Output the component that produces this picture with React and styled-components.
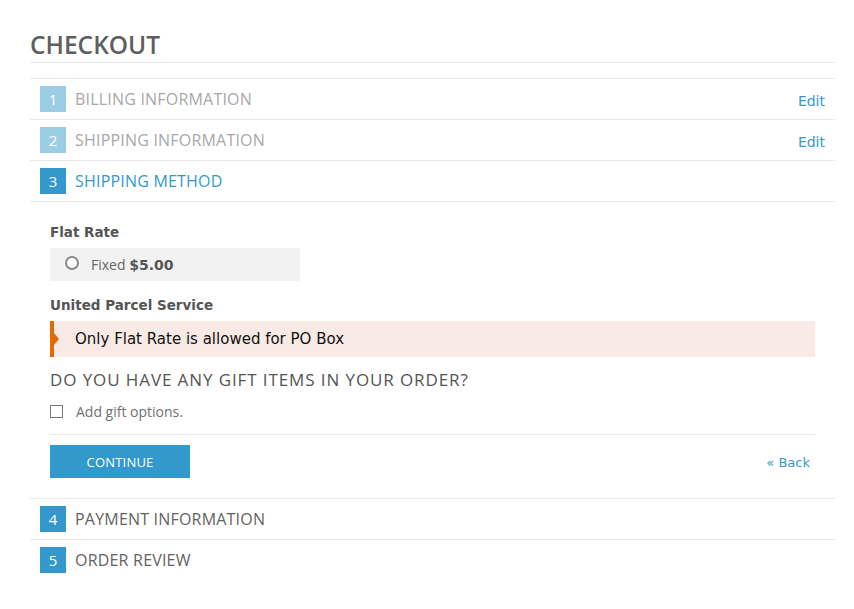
import React from "react";
import styled, { createGlobalStyle } from "styled-components";

const GlobalStyle = createGlobalStyle`
  body {
    margin: 0;
    background: #fff;
    font-family: "Open Sans", "DejaVu Sans", sans-serif;
  }
`;

const steps = [
  { n: 1, title: "Billing Information", state: "done" },
  { n: 2, title: "Shipping Information", state: "done" },
  { n: 3, title: "Shipping Method", state: "active" },
  { n: 4, title: "Payment Information", state: "todo" },
  { n: 5, title: "Order Review", state: "todo" },
];

const App = () => {
  const [gift, setGift] = React.useState(false);
  const [rate, setRate] = React.useState(false);

  return (
    <Page>
      <GlobalStyle />
      <Title>Checkout</Title>
      <StepList>
        {steps.map((s) => (
          <Step key={s.n}>
            <StepHead>
              <StepNumber state={s.state}>{s.n}</StepNumber>
              <StepTitle state={s.state}>{s.title}</StepTitle>
              {s.state === "done" && <EditLink href="#">Edit</EditLink>}
            </StepHead>
            {s.state === "active" && (
              <StepBody>
                <CarrierName>Flat Rate</CarrierName>
                <RateOption onClick={() => setRate(!rate)}>
                  <Radio checked={rate} />
                  <RateLabel>
                    Fixed <strong>$5.00</strong>
                  </RateLabel>
                </RateOption>
                <CarrierName>United Parcel Service</CarrierName>
                <Notice>Only Flat Rate is allowed for PO Box</Notice>
                <GiftHeading>Do you have any gift items in your order?</GiftHeading>
                <CheckRow onClick={() => setGift(!gift)}>
                  <CheckBox checked={gift} />
                  <CheckLabel>Add gift options.</CheckLabel>
                </CheckRow>
                <Actions>
                  <ContinueButton>Continue</ContinueButton>
                  <BackLink href="#">« Back</BackLink>
                </Actions>
              </StepBody>
            )}
          </Step>
        ))}
      </StepList>
    </Page>
  );
};

export default App;

const Page = styled.div`
  width: 805px;
  padding: 30px 0 20px 30px;
`;

const Title = styled.h1`
  margin: 0;
  font-family: "Open Sans", sans-serif;
  font-weight: 600;
  font-size: 24.5px;
  line-height: 30px;
  color: #5f5f5f;
  text-transform: uppercase;
  padding-bottom: 2px;
  border-bottom: 1px solid #e8e8e8;
`;

const StepList = styled.div`
  margin-top: 15px;
  border-top: 1px solid #e8e8e8;
`;

const Step = styled.div`
  border-bottom: 1px solid #e8e8e8;
  &:last-child {
    border-bottom: none;
  }
`;

const StepHead = styled.div`
  height: 40px;
  display: flex;
  align-items: center;
  padding: 0 10px;
`;

const numberBg = {
  done: "#9bcde5",
  active: "#3399cc",
  todo: "#3399cc",
};

const StepNumber = styled.span`
  width: 26px;
  height: 26px;
  display: flex;
  align-items: center;
  justify-content: center;
  background: ${(p) => numberBg[p.state]};
  color: #fff;
  font-family: "Open Sans", sans-serif;
  font-size: 15px;
`;

const titleColor = {
  done: "#a8a8a8",
  active: "#3399cc",
  todo: "#636363",
};

const StepTitle = styled.span`
  margin-left: 9px;
  flex: 1;
  font-family: "Open Sans", sans-serif;
  font-size: 16px;
  text-transform: uppercase;
  color: ${(p) => titleColor[p.state]};
  letter-spacing: 0.2px;
`;

const EditLink = styled.a`
  margin-top: 3px;
  font-family: "DejaVu Sans", Verdana, sans-serif;
  font-size: 14px;
  color: #3399cc;
  text-decoration: none;
`;

const StepBody = styled.div`
  padding: 20px 20px 20px;
  border-top: 1px solid #e8e8e8;
`;

const CarrierName = styled.div`
  font-family: "DejaVu Sans", Verdana, sans-serif;
  font-weight: bold;
  font-size: 13.5px;
  line-height: 20px;
  color: #555;
  margin-bottom: 6px;
  padding-top: 1px;
  margin-top: -1px;
`;

const RateOption = styled.label`
  width: 250px;
  height: 33px;
  display: flex;
  align-items: center;
  padding-left: 14px;
  box-sizing: border-box;
  background: #f2f2f2;
  margin-bottom: 14px;
  cursor: pointer;
`;

const Radio = styled.span`
  width: 10px;
  height: 10px;
  border-radius: 50%;
  border: 2px solid #8a8a8a;
  background: ${(p) => (p.checked ? "#3399cc" : "#fff")};
  margin-right: 12px;
  margin-left: 1px;
  margin-top: -3px;
`;

const RateLabel = styled.span`
  font-family: "Open Sans", sans-serif;
  font-size: 14px;
  color: #666;
  strong {
    font-family: "DejaVu Sans", Verdana, sans-serif;
    font-size: 14px;
    color: #555;
  }
`;

const Notice = styled.div`
  position: relative;
  height: 36px;
  display: flex;
  align-items: center;
  padding-left: 21px;
  background: #f9eae5;
  border-left: 4px solid #e26a05;
  box-sizing: border-box;
  font-family: "DejaVu Sans", Verdana, sans-serif;
  font-size: 15px;
  color: #111;
  margin-top: 2px;
  &::before {
    content: "";
    position: absolute;
    left: 0;
    top: 12px;
    border-top: 6px solid transparent;
    border-bottom: 6px solid transparent;
    border-left: 5px solid #e26a05;
  }
`;

const GiftHeading = styled.h3`
  margin: 12px 0 0;
  font-family: "Open Sans", sans-serif;
  font-weight: 400;
  font-size: 17px;
  line-height: 22px;
  color: #555;
  text-transform: uppercase;
  letter-spacing: 0.9px;
`;

const CheckRow = styled.label`
  display: flex;
  align-items: center;
  height: 22px;
  margin-top: 9px;
  cursor: pointer;
`;

const CheckBox = styled.span`
  width: 11px;
  height: 11px;
  border: 1px solid #777;
  background: ${(p) => (p.checked ? "#3399cc" : "#fff")};
  margin-right: 13px;
`;

const CheckLabel = styled.span`
  font-family: "Open Sans", sans-serif;
  font-size: 14px;
  color: #707070;
`;

const Actions = styled.div`
  margin-top: 12px;
  padding-top: 10px;
  border-top: 1px solid #e8e8e8;
  display: flex;
  align-items: center;
  justify-content: space-between;
`;

const ContinueButton = styled.button`
  width: 140px;
  height: 33px;
  border: none;
  background: #3399cc;
  color: #fff;
  font-family: "Open Sans", sans-serif;
  font-size: 13px;
  letter-spacing: 0.2px;
  text-transform: uppercase;
  cursor: pointer;
`;

const BackLink = styled.a`
  margin-right: 5px;
  padding-top: 2px;
  font-family: "DejaVu Sans", Verdana, sans-serif;
  font-size: 13px;
  color: #3399cc;
  text-decoration: none;
`;
